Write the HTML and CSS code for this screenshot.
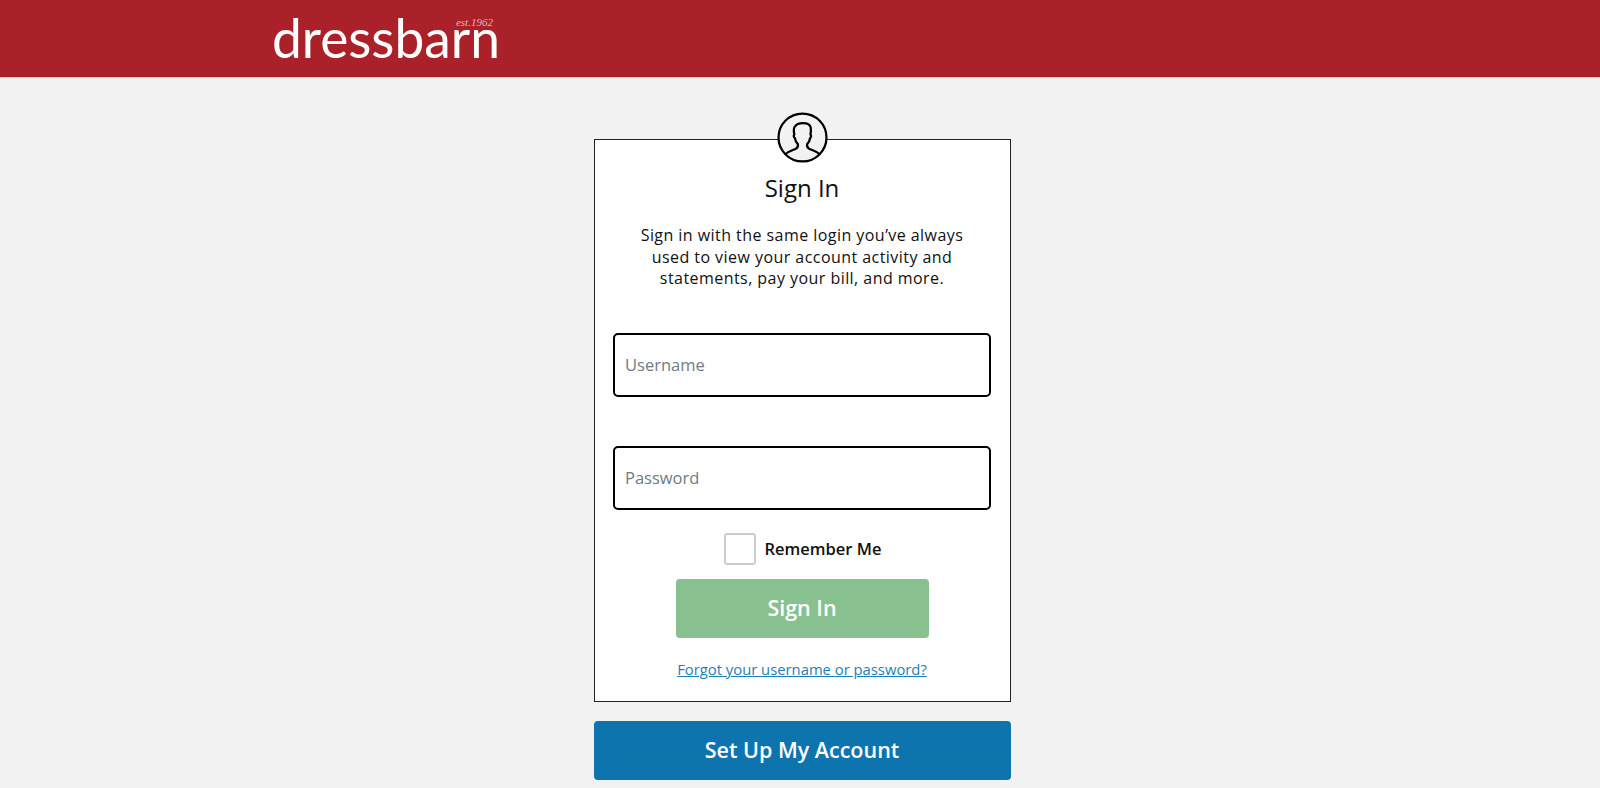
FILE: index.html
```html
<!DOCTYPE html>
<html lang="en">
<head>
    <meta charset="UTF-8">
    <meta name="viewport" content="width=device-width, initial-scale=1.0">
    <title>Sign In</title>
    <link rel="stylesheet" href="styles.css">
</head>
<body>
    <!-- header -->
    <header class="site-header">
        <a class="logo" href="#">dressbarn<span class="logo-est">est.1962</span></a>
    </header>

    <main class="content">
        <!-- sign in card -->
        <form class="card">
            <div class="card-icon">
                <svg width="51" height="51" viewBox="0 0 50 50">
                    <circle cx="25" cy="25" r="23.500" fill="#f2f2f2" stroke="#000" stroke-width="2.200"/>
                    <path d="M8 41.500 C11 38.500 15 37.500 18.500 36 C20.500 35 20.800 33.500 20.500 31.500 C18.800 30 17.800 27.500 17.500 25.500 C16.300 25 16 23 17 22 C16.300 19 16.300 15.500 17.800 14 C19 11.500 22 10.800 25.500 10.800 C29.500 10.800 32.300 12 33 15 C33.500 17.500 33.200 20 32.800 22 C33.800 23 33.500 25 32.500 25.500 C32.200 27.500 31.200 30 29.500 31.500 C29.200 33.500 29.500 35 31.500 36 C35 37.500 39 38.500 42 41.500" fill="none" stroke="#000" stroke-width="2.200" stroke-linejoin="round"/>
                </svg>
            </div>
            <h1 class="card-title">Sign In</h1>
            <p class="card-text">Sign in with the same login you’ve always used to view your account activity and statements, pay your bill, and more.</p>
            <input class="text-input" type="text" placeholder="Username">
            <input class="text-input" type="password" placeholder="Password">
            <label class="remember">
                <span class="checkbox"></span>
                <span>Remember Me</span>
            </label>
            <button class="btn btn-signin" type="button">Sign In</button>
            <a class="forgot" href="#">Forgot your username or password?</a>
        </form>
        <button class="btn btn-setup" type="button">Set Up My Account</button>
    </main>
</body>
</html>
```

FILE: styles.css
```css
* {
    box-sizing: border-box;
}

body {
    margin: 0;
    background-color: #f2f2f2;
    color: #111;
    font-family: "Open Sans", Lato, sans-serif;
}

/* header */
.site-header {
    height: 78px;
    padding-left: 272px;
    background-color: #aa2129;
    border-bottom: 1px solid #d5d5d5;
}

.logo {
    position: relative;
    display: inline-block;
    color: #fff;
    font-family: Lato, sans-serif;
    font-size: 53.300px;
    font-weight: 400;
    line-height: 75px;
    text-decoration: none;
}

.logo-est {
    position: absolute;
    top: 16px;
    right: 7px;
    color: #e3b6b9;
    font-family: "Liberation Serif", serif;
    font-size: 11px;
    font-style: italic;
    line-height: 12px;
}

/* card */
.content {
    display: flex;
    flex-direction: column;
    align-items: center;
    padding: 61px 0 0 4px;
}

.card {
    position: relative;
    display: flex;
    flex-direction: column;
    align-items: center;
    width: 417px;
    height: 563px;
    padding: 33px 19px 0;
    background-color: #fff;
    border: 1px solid #222;
}

.card-icon {
    position: absolute;
    top: -28px;
    left: 182px;
    height: 51px;
}

.card-title {
    margin: 0;
    font-size: 24px;
    font-weight: 400;
    line-height: 30px;
}

.card-text {
    width: 350px;
    margin: 22px 0 43px;
    font-size: 16px;
    letter-spacing: 0.45px;
    line-height: 21.500px;
    text-align: center;
}

.text-input {
    width: 378px;
    height: 64px;
    margin-bottom: 49px;
    padding: 0 10px;
    background-color: #fff;
    border: 2px solid #000;
    border-radius: 5px;
    font-family: inherit;
    font-size: 16.500px;
}

.text-input::placeholder {
    color: #6f7b85;
    opacity: 1;
}

.text-input + .text-input {
    margin-bottom: 23px;
}

.remember {
    display: flex;
    align-items: center;
    gap: 9px;
    margin-left: 1px;
    font-size: 16.500px;
    font-weight: 600;
}

.checkbox {
    width: 32px;
    height: 32px;
    background-color: #fff;
    border: 2px solid #ccc;
    border-radius: 3px;
}

.btn {
    height: 59px;
    padding-bottom: 3px;
    border: 0;
    border-radius: 4px;
    color: #fff;
    font-family: inherit;
    font-size: 21.500px;
    font-weight: 600;
}

.btn-signin {
    width: 253px;
    margin-top: 14px;
    background-color: #88c08f;
}

.forgot {
    margin-top: 21px;
    color: #1c7fb8;
    font-size: 14.800px;
}

.btn-setup {
    width: 417px;
    margin-top: 19px;
    background-color: #0e74ae;
}
```
